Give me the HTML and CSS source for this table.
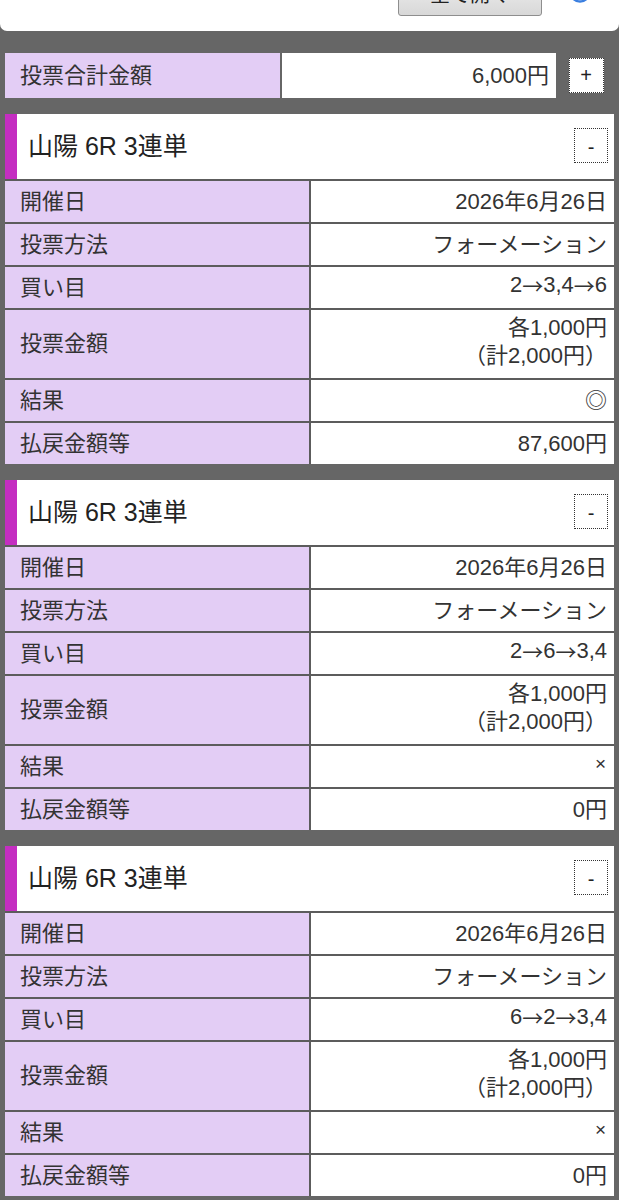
FILE: index.html
```html
<!DOCTYPE html>
<html lang="ja">
<head>
<meta charset="utf-8">
<title>投票内容</title>
<link rel="stylesheet" href="styles.css">
</head>
<body>
<div class="top">
  <button class="open-all" type="button">全て開く</button>
  <span class="help-icon"><svg width="22" height="22" viewBox="0 0 22 22"><circle cx="11" cy="11" r="9.5" fill="#fff" stroke="#3b7fe0" stroke-width="2.5"/></svg></span>
</div>

<div class="total">
  <div class="label">投票合計金額</div>
  <div class="value">6,000円</div>
  <div class="toggle-wrap"><span class="toggle">+</span></div>
</div>

<section class="card">
  <div class="card-head"><span class="bar"></span><h2>山陽 6R 3連単</h2><span class="toggle">-</span></div>
  <div class="label">開催日</div><div class="value">2026年6月26日</div>
  <div class="label">投票方法</div><div class="value">フォーメーション</div>
  <div class="label">買い目</div><div class="value">2<span class="arrow">→</span>3,4<span class="arrow">→</span>6</div>
  <div class="label">投票金額</div><div class="value multi"><span>各1,000円</span><span>（計2,000円）</span></div>
  <div class="label">結果</div><div class="value">◎</div>
  <div class="label">払戻金額等</div><div class="value">87,600円</div>
</section>

<section class="card">
  <div class="card-head"><span class="bar"></span><h2>山陽 6R 3連単</h2><span class="toggle">-</span></div>
  <div class="label">開催日</div><div class="value">2026年6月26日</div>
  <div class="label">投票方法</div><div class="value">フォーメーション</div>
  <div class="label">買い目</div><div class="value">2<span class="arrow">→</span>6<span class="arrow">→</span>3,4</div>
  <div class="label">投票金額</div><div class="value multi"><span>各1,000円</span><span>（計2,000円）</span></div>
  <div class="label">結果</div><div class="value"><span class="cross">×</span></div>
  <div class="label">払戻金額等</div><div class="value">0円</div>
</section>

<section class="card">
  <div class="card-head"><span class="bar"></span><h2>山陽 6R 3連単</h2><span class="toggle">-</span></div>
  <div class="label">開催日</div><div class="value">2026年6月26日</div>
  <div class="label">投票方法</div><div class="value">フォーメーション</div>
  <div class="label">買い目</div><div class="value">6<span class="arrow">→</span>2<span class="arrow">→</span>3,4</div>
  <div class="label">投票金額</div><div class="value multi"><span>各1,000円</span><span>（計2,000円）</span></div>
  <div class="label">結果</div><div class="value"><span class="cross">×</span></div>
  <div class="label">払戻金額等</div><div class="value">0円</div>
</section>
</body>
</html>
```

FILE: styles.css
```css
html, body {
  margin: 0;
  padding: 0;
}
body {
  background: #666666;
  font-family: "Liberation Sans", "Noto Sans CJK JP", sans-serif;
  color: #333333;
  overflow: hidden;
}

.top {
  margin-top: -30px;
  background: #ffffff;
  border-radius: 0 0 7px 7px;
  padding: 0 28px 15px 0;
  display: flex;
  justify-content: flex-end;
  align-items: flex-end;
  gap: 27px;
}
.open-all {
  width: 144px;
  height: 46px;
  border: 1px solid #8e8e8e;
  border-radius: 3px;
  background: linear-gradient(#f4f4f4, #d8d8d8);
  font-family: "Noto Sans CJK JP", sans-serif;
  font-size: 20px;
  color: #222222;
  padding: 0;
}
.help-icon {
  display: flex;
  margin-bottom: 13px;
}

.total {
  display: grid;
  grid-template-columns: 275px 274px 1fr;
  column-gap: 2px;
  height: 45px;
  margin: 22px 5px 0;
}

.label {
  background: #e3cdf5;
  display: flex;
  align-items: center;
  padding: 0 0 6px 15px;
  font-size: 22px;
  color: #333333;
  white-space: nowrap;
}
.value {
  background: #ffffff;
  display: flex;
  align-items: center;
  justify-content: flex-end;
  padding: 0 7px 6px 0;
  font-size: 22px;
  color: #333333;
  white-space: nowrap;
}
.value.multi {
  flex-direction: column;
  align-items: flex-end;
  justify-content: center;
  line-height: 28px;
  padding-bottom: 4px;
}
.arrow {
  font-family: "Noto Sans CJK JP", sans-serif;
  font-size: 21px;
}
.cross {
  font-size: 19px;
  margin-right: 1px;
}

.toggle-wrap {
  display: flex;
  align-items: center;
  justify-content: center;
}
.toggle {
  box-sizing: border-box;
  width: 35px;
  height: 35px;
  background: #ffffff;
  border: 1px dotted #333333;
  display: flex;
  align-items: center;
  justify-content: center;
  font-size: 20px;
  color: #222222;
  font-family: "Liberation Sans", sans-serif;
}

.card {
  margin: 16px 5px 0;
  display: grid;
  grid-template-columns: 1fr 1fr;
  grid-template-rows: 65px 41px 41px 41px 68px 41px 41px;
  gap: 2px;
  background: #5c5c5c;
}
.card-head {
  grid-column: 1 / -1;
  background: #ffffff;
  display: flex;
  align-items: center;
}
.bar {
  width: 12px;
  align-self: stretch;
  background: #c42ec1;
}
.card-head h2 {
  flex: 1;
  margin: 0 0 6px 11px;
  font-size: 25px;
  font-weight: normal;
  color: #222222;
}
.card-head .toggle {
  width: 34px;
  margin-right: 6px;
  margin-top: -2px;
  padding-top: 3px;
}
```
